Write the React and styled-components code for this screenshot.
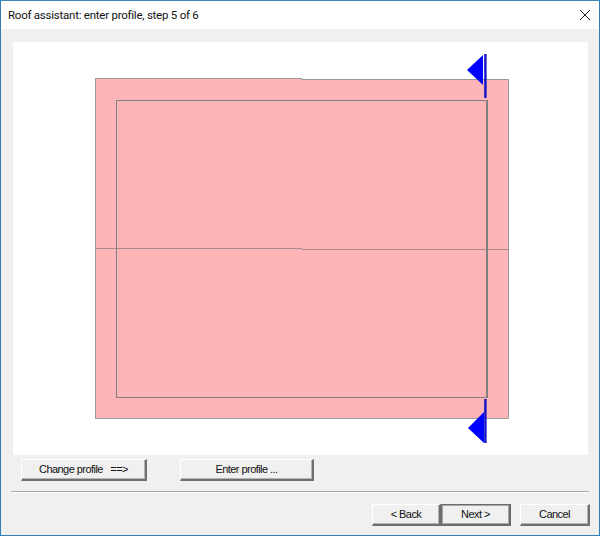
import React from "react";
import styled, { createGlobalStyle } from "styled-components";

const Global = createGlobalStyle`
  html, body { margin: 0; padding: 0; background: #f0f0f0; }
`;

const Window = styled.div`
  box-sizing: border-box;
  width: 600px;
  height: 536px;
  border: 1px solid #2f7fb5;
  border-top-color: #3a86ba;
  background: #f0f0f0;
  display: flex;
  flex-direction: column;
  font-family: "Liberation Sans", Arial, sans-serif;
  color: #000;
  overflow: hidden;
`;

const TitleBar = styled.header`
  height: 28px;
  background: #fff;
  display: flex;
  align-items: center;
  justify-content: space-between;
  padding: 0 8px 0 7px;
  flex: none;
`;

const Title = styled.span`
  font-family: Roboto, "Open Sans", sans-serif;
  font-size: 11.5px;
  letter-spacing: -0.24px;
  line-height: 28px;
  color: #111;
`;

const CloseIcon = styled.svg`
  width: 10px;
  height: 10px;
  display: block;
  margin-right: 1px;
`;

const Body = styled.main`
  flex: 1;
  display: flex;
  flex-direction: column;
  padding: 13px 10px 0 10px;
`;

const Canvas = styled.section`
  width: 575px;
  height: 413px;
  margin-left: 2px;
  background: #fff;
  flex: none;
`;

const Drawing = styled.svg`
  display: block;
  width: 575px;
  height: 413px;
`;

const ProfileRow = styled.div`
  display: flex;
  gap: 33px;
  margin: 4px 0 0 10px;
`;

const Button = styled.button`
  box-sizing: border-box;
  width: ${(p) => p.$w}px;
  height: 22px;
  padding: 0 0 2px;
  font-family: "Liberation Sans", Arial, sans-serif;
  font-size: 11px;
  letter-spacing: -0.55px;
  white-space: pre;
  color: #111;
  background: #f0f0f0;
  border-style: solid;
  border-width: 1px 2px 2px 1px;
  border-color: #fff #6f6f6f #6f6f6f #fff;
  box-shadow: inset -1px -1px 0 #b4b4b4;
  ${(p) =>
    p.$default &&
    `
    border-width: 1px 2px 2px 1px;
    border-color: #6a6a6a;
    box-shadow: inset 1px 1px 0 #a8a8a8, inset -1px -1px 0 #a8a8a8;
  `}
`;

const Separator = styled.hr`
  width: 578px;
  height: 2px;
  margin: 10px 0 0 0;
  border: 0;
  border-top: 1px solid #a9a9a9;
  border-bottom: 1px solid #fff;
  box-sizing: border-box;
`;

const Footer = styled.footer`
  display: flex;
  justify-content: flex-end;
  margin: 11px -1px 0 0;
`;

const NavGroup = styled.div`
  display: flex;
  margin-right: 9px;
`;

const Flag = ({ triangle, poleY }) => (
  <g>
    <polygon points={triangle} fill="#0000ff" />
    <rect x="471.2" y={poleY} width="2.4" height="44" fill="#1010c8" />
  </g>
);

export default function App() {
  return (
    <>
      <Global />
      <Window>
        <TitleBar>
          <Title>Roof assistant: enter profile, step 5 of 6</Title>
          <CloseIcon viewBox="0 0 10 10">
            <path d="M0 0 L10 10 M10 0 L0 10" stroke="#222" strokeWidth="1" fill="none" />
          </CloseIcon>
        </TitleBar>
        <Body>
          <Canvas>
            <Drawing viewBox="0 0 575 413">
              <rect x="82" y="37" width="414" height="340" fill="#fdb5b8" />
              <path d="M82.5 377 V36.5 H289 V37.5 H495.5 V376.5 H82" fill="none" stroke="#999" />
              <path d="M82 206.5 H289 V207.5 H496" fill="none" stroke="#a88a8c" />
              <rect x="103.5" y="58.5" width="370" height="297" fill="none" stroke="#808080" />
              <line x1="474" y1="58" x2="474" y2="356" stroke="#808080" strokeWidth="2" />
              <Flag triangle="454,28 470,13 470,43" poleY={12} />
              <Flag triangle="455,386 471,370 471,401" poleY={357} />
            </Drawing>
          </Canvas>
          <ProfileRow>
            <Button $w={126}>{"Change profile   ==>"}</Button>
            <Button $w={134}>Enter profile ...</Button>
          </ProfileRow>
          <Separator />
          <Footer>
            <NavGroup>
              <Button $w={69}>{"< Back"}</Button>
              <Button $w={70} $default>{"Next >"}</Button>
            </NavGroup>
            <Button $w={70}>Cancel</Button>
          </Footer>
        </Body>
      </Window>
    </>
  );
}
